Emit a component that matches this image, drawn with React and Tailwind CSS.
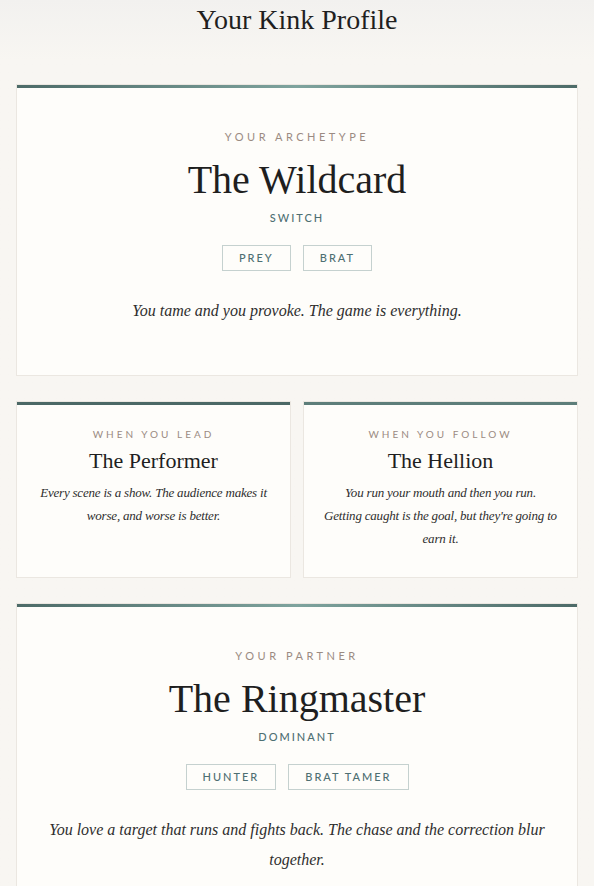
const serif = "font-['Liberation_Serif','Times_New_Roman',serif]";
const sans = "font-['Lato','Open_Sans',sans-serif]";

function Tag({ children }) {
  return (
    <span className={`${sans} inline-flex h-[26px] items-center border border-[#c5d1cf] px-4 text-[11px] font-medium tracking-[2px] text-[#4e6f72]`}>
      {children}
    </span>
  );
}

function BigCard({ label, title, role, tags, text }) {
  return (
    <div className="border border-[#ebe7e1] bg-[#fefdfa]">
      <div className="h-[3px] bg-gradient-to-r from-[#4d6b68] via-[#7ea39d] to-[#4d6b68]" />
      <div className="flex flex-col items-center px-5 pb-[49px] pt-[41px] text-center">
        <div className={`${sans} text-[11px] tracking-[3.5px] text-[#9b8b82]`}>{label}</div>
        <h2 className={`${serif} mt-[8px] text-[40px] leading-[52px] text-[#1f1f1f]`}>{title}</h2>
        <div className={`${sans} mt-[4px] text-[11px] font-medium tracking-[2px] text-[#4e6f72]`}>{role}</div>
        <div className="mt-[19px] flex gap-3">
          {tags.map((t) => (
            <Tag key={t}>{t}</Tag>
          ))}
        </div>
        <p className={`${serif} mt-[25px] max-w-[504px] text-[16px] italic leading-[30px] text-[#2e2e2e]`}>{text}</p>
      </div>
    </div>
  );
}

function SmallCard({ label, title, lines, bar }) {
  return (
    <div className="border border-[#ebe7e1] bg-[#fefdfa]">
      <div className={`h-[3px] ${bar}`} />
      <div className="flex flex-col items-center px-4 pb-[27px] pt-[22px] text-center">
        <div className={`${sans} text-[10px] tracking-[3px] text-[#9b8b82]`}>{label}</div>
        <h3 className={`${serif} mt-[4px] text-[22px] leading-[30px] text-[#1f1f1f]`}>{title}</h3>
        <p className={`${serif} mt-[5px] whitespace-nowrap text-[13px] italic leading-[23px] tracking-[-0.2px] text-[#2e2e2e]`}>
          {lines.map((l, i) => (
            <span key={i} className="block">{l}</span>
          ))}
        </p>
      </div>
    </div>
  );
}

export default function App() {
  return (
    <div className="min-h-screen bg-gradient-to-b from-[#f2f1ef] to-[#f8f6f2] to-[60px] px-4 pb-10">
      <h1 className={`${serif} pt-[2px] text-center text-[28px] leading-[36px] text-[#1f1f1f]`}>Your Kink Profile</h1>

      <div className="mt-[46px] flex flex-col gap-[25px]">
        <BigCard
          label="YOUR ARCHETYPE"
          title="The Wildcard"
          role="SWITCH"
          tags={["PREY", "BRAT"]}
          text="You tame and you provoke. The game is everything."
        />

        <div className="grid grid-cols-2 gap-[12px]">
          <SmallCard
            label="WHEN YOU LEAD"
            title="The Performer"
            bar="bg-[#4b6866]"
            lines={["Every scene is a show. The audience makes it", "worse, and worse is better."]}
          />
          <SmallCard
            label="WHEN YOU FOLLOW"
            title="The Hellion"
            bar="bg-[#5d7e7a]"
            lines={["You run your mouth and then you run.", "Getting caught is the goal, but they're going to", "earn it."]}
          />
        </div>

        <BigCard
          label="YOUR PARTNER"
          title="The Ringmaster"
          role="DOMINANT"
          tags={["HUNTER", "BRAT TAMER"]}
          text="You love a target that runs and fights back. The chase and the correction blur together."
        />
      </div>
    </div>
  );
}
